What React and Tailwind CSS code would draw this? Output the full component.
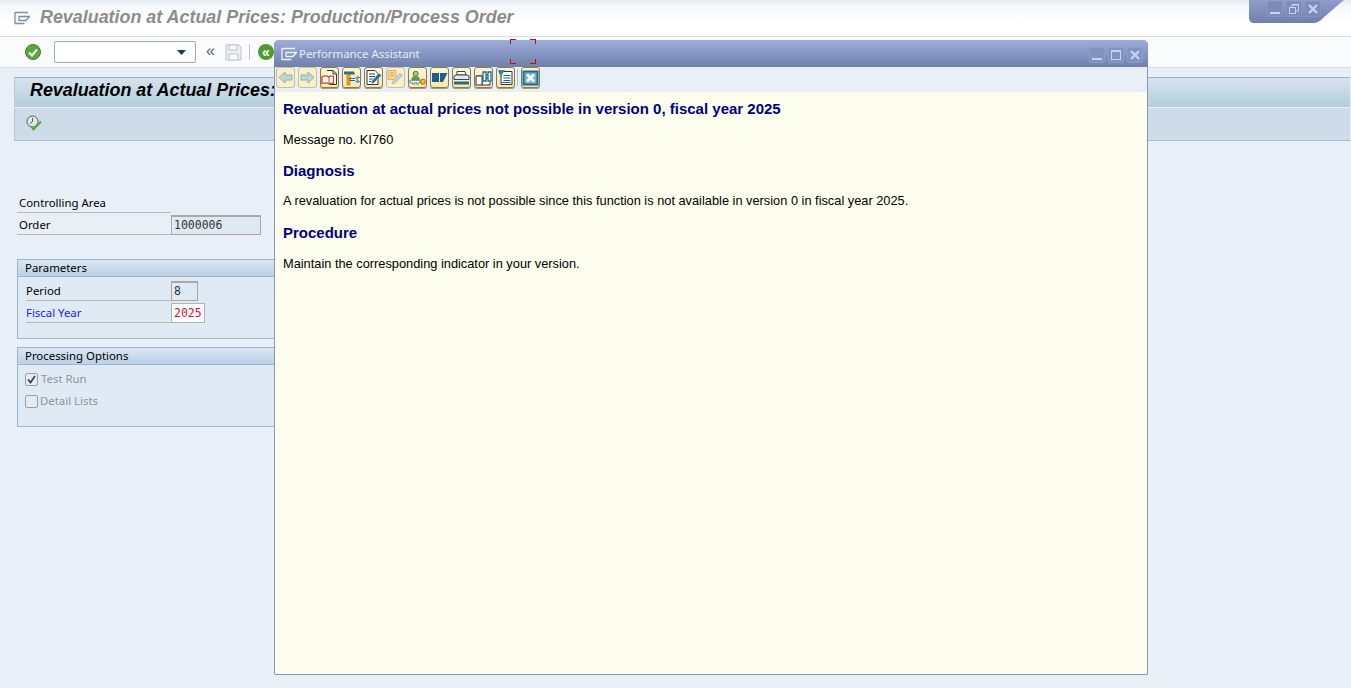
import React from 'react';

const labelFont = 'font-["Noto_Sans",sans-serif]';
const monoFont = 'font-["DejaVu_Sans_Mono",monospace]';

const ShellIcon = ({ color = '#7f8ea8', className = '' }) => (
  <svg width="16" height="14" viewBox="0 0 16 14" fill="none" className={className}>
    <path d="M1 1.500h13M1 1v11.500h9.500M5 5.500h10.500L12 9.500H5z" stroke={color} strokeWidth="1.300" />
  </svg>
);

const TbButton = ({ children, off }) => (
  <div className={`w-[19px] h-[21px] rounded-[3px] border flex items-center justify-center ${off ? 'border-[#c9c09a] bg-[#f9f0c8]' : 'border-[#867b58] bg-[linear-gradient(#fff6cf,#fbe8aa)] shadow-[0_1px_0_#a89a6a]'}`}>
    {children}
  </div>
);

const helpButtons = [
  // back
  <svg width="15" height="13" viewBox="0 0 15 13"><path d="M7 1 1 6.500 7 12V9h7V4H7z" fill="#bcd5d5" stroke="#8fb0b4" /></svg>,
  // forward
  <svg width="15" height="13" viewBox="0 0 15 13"><path d="M8 1l6 5.500L8 12V9H1V4h7z" fill="#bcd5d5" stroke="#8fb0b4" /></svg>,
  // book + page
  <svg width="17" height="17" viewBox="0 0 17 17" fill="none"><path d="M6 1.500h6l3.500 3.500v10.500H9" fill="#fff" stroke="#333" /><path d="M12 1.500V5h3.500" stroke="#333" /><path d="M1 7.500c3-1 5-1 7 .5 2-1.500 3-1.500 4.500-.5v7c-2-1-3-.500-4.500.5-2-1.500-4-1.500-7-.5z" fill="#fff" stroke="#d8431c" strokeWidth="1.300" /><path d="M8 8v7" stroke="#d8431c" /></svg>,
  // hammer + wrench
  <svg width="17" height="16" viewBox="0 0 17 16" fill="none"><path d="M1 1.500h10l1 3H1z" fill="#2a6f97" /><path d="M4 4.500h3V15H4z" fill="#f59b14" stroke="#b76a00" strokeWidth=".6" /><path d="M7 8.500h5a3 3 0 0 1 4.500-1l-2.500 1v2l2.500 1a3 3 0 0 1-4.500-1H7z" fill="#fff" stroke="#1f6a96" /></svg>,
  // note + pencil
  <svg width="17" height="17" viewBox="0 0 17 17" fill="none"><path d="M2 1.500h8l3 3v11H2z" fill="#fff" stroke="#333" /><path d="M4 5h6M4 7.500h6M4 10h4M4 12.500h2" stroke="#345" /><path d="M6 15l1-3.500L14 4l2.500 2.500L9 14z" fill="#2a6f97" stroke="#fff" strokeWidth=".5" /></svg>,
  // inactive note + pencil
  <svg width="17" height="17" viewBox="0 0 17 17" fill="none" opacity=".7"><path d="M1 1.500h8v9H1z" fill="#f6c979" stroke="#d79b3d" /><path d="M3 4h4M3 6.500h4" stroke="#c68a2e" /><path d="M5 15l1-3.500L13 4l2.500 2.500L8 14z" fill="#a9c4d4" stroke="#7f9fb2" strokeWidth=".7" /></svg>,
  // user + key
  <svg width="18" height="16" viewBox="0 0 18 16" fill="none"><circle cx="7" cy="3.500" r="2.700" fill="#a8c48a" stroke="#4c7a38" /><path d="M2.500 10c0-3 2-4 4.500-4s4.500 1 4.500 4z" fill="#5c9b4a" /><path d="M1 10.500h11v2.500h-2v1.500H8V13H6v1.500H4V13H1z" fill="#fff" stroke="#2a6f97" strokeWidth=".8" /><rect x="12.500" y="9.500" width="4.500" height="5" rx="1" fill="#f2c230" stroke="#c7521a" /></svg>,
  // split panel
  <svg width="17" height="11" viewBox="0 0 17 11"><path d="M1 1h7v9H1z" fill="#1f5f8f" /><path d="M9 1h7.500L12 10H9z" fill="#1f5f8f" /></svg>,
  // printer
  <svg width="17" height="16" viewBox="0 0 17 16" fill="none"><path d="M4 1.500h8l1 3.500H4z" fill="#fff" stroke="#345" /><path d="M1 6l2-1h11l2 1v3.500H1z" fill="#e6ebf0" stroke="#345" /><rect x="1" y="11.500" width="15" height="3" fill="#1f6a96" /></svg>,
  // binoculars + page
  <svg width="17" height="16" viewBox="0 0 17 16" fill="none"><path d="M1 6h6v9h8v-3" fill="#fff" stroke="#333" /><path d="M7 6V15H1V6z" fill="#fff" stroke="#333" /><path d="M8 2h3v9H8zM13 2h3v9h-3zM11 5h2v3h-2z" fill="#fff" stroke="#1f6a96" strokeWidth="1.300" /></svg>,
  // list
  <svg width="17" height="17" viewBox="0 0 17 17" fill="none"><path d="M2 2.500h13v13H4V7z" fill="#fff" stroke="#333" /><path d="M1 1h7L4 7z" fill="#2a86b8" /><path d="M6.500 6.500h7M6.500 9h7M6.500 11.500h7M5 13.500h8.500" stroke="#1f5f8f" /></svg>,
];

const WinBtn = ({ children, light }) => (
  <div className={`w-[16px] h-[16px] rounded-[2px] border flex items-center justify-center ${light ? 'border-[#8d9cc6] bg-[#8293c0]' : 'border-[#8494bd] bg-[#7c8cb6]'}`}>
    {children}
  </div>
);

const WinGlyph = ({ type, color = '#c5d2f0' }) => {
  if (type === 'min') return <svg width="12" height="12" viewBox="0 0 12 12"><rect x="1" y="9" width="10" height="2" fill={color} /></svg>;
  if (type === 'max') return <svg width="12" height="12" viewBox="0 0 12 12" fill="none"><rect x="1.500" y="1.500" width="9" height="9" stroke={color} /><rect x="1" y="1" width="10" height="2" fill={color} /></svg>;
  if (type === 'restore') return <svg width="12" height="12" viewBox="0 0 12 12" fill="none"><rect x="1.500" y="4.500" width="6" height="6" stroke={color} /><path d="M4 4V1.500h6.500V8H8" stroke={color} /><rect x="4" y="1" width="7" height="1.500" fill={color} /></svg>;
  return <svg width="12" height="12" viewBox="0 0 12 12"><path d="M2 2l8 8M10 2l-8 8" stroke={color} strokeWidth="2.400" /></svg>;
};

const Row = ({ label, labelClass = 'text-black', width, children }) => (
  <div className="flex items-end h-[22px]">
    <div className={`h-[22px] border-b border-[#b9b9b9] flex items-end text-[11.400px] leading-[18px] ${labelClass} ${width}`}>{label}</div>
    {children}
  </div>
);

const Group = ({ title, children }) => (
  <div className="w-[700px] border border-[#9db7d2] bg-[#dfeaf4]">
    <div className="h-[17px] bg-[linear-gradient(#d9e6f1,#bdd2e6)] border-b border-[#9db7d2] pl-[7px] text-[11.400px] leading-[16px] text-black">{title}</div>
    {children}
  </div>
);

export default function App() {
  return (
    <div className="relative w-[1351px] h-[688px] overflow-hidden bg-[#e8eff7] font-['Liberation_Sans',sans-serif]">
      {/* title bar */}
      <div className="h-[37px] bg-[linear-gradient(#e4eaf3_0px,#f6f8fb_6px,#ffffff_24px)] border-b border-[#d5dde6] flex items-center pl-[14px]">
        <ShellIcon className="mr-[10px]" />
        <div className="text-[17.900px] font-bold italic text-[#8c8c8c] leading-none">Revaluation at Actual Prices: Production/Process Order</div>
      </div>

      {/* system toolbar */}
      <div className="h-[31px] bg-[#fafbfd] border-b border-[#d5dde6] flex items-center pl-[25px]">
        <svg width="16" height="16" viewBox="0 0 16 16">
          <circle cx="8" cy="8" r="7.500" fill="#5aa83a" stroke="#3f7f2a" />
          <path d="M4 8.500l3 3 5-6" stroke="#fff" strokeWidth="2" fill="none" />
        </svg>
        <div className="ml-[13px] w-[142px] h-[22px] rounded-[2px] border border-[#a9a9a9] bg-white flex items-center justify-end pr-[9px]">
          <svg width="9" height="5" viewBox="0 0 9 5"><path d="M0 0h9L4.500 5z" fill="#1d3563" /></svg>
        </div>
        <div className="ml-[10px] w-[12px] text-[16px] leading-none text-[#5c6570] -mt-[2px]">«</div>
        <svg width="17" height="17" viewBox="0 0 17 17" fill="none" className="ml-[7px]">
          <path d="M1 1h13l2 2v13H1z" fill="#eceef0" stroke="#bfc4c9" />
          <path d="M4 1h8v5H4zM4 10h9v6H4z" fill="#f8f9fa" stroke="#bfc4c9" />
        </svg>
        <div className="ml-[7px] w-px h-[16px] bg-[#b7c6d4]" />
        <div className="ml-[8px] w-[16px] h-[16px] rounded-full bg-[#4f9a33] flex items-center justify-center text-[14px] leading-none font-bold text-white">«</div>
      </div>

      {/* screen */}
      <div className="pl-[14px] pr-px pt-[9px]">
        <div className="border-t border-[#9db0c4] bg-[linear-gradient(#d6e3ed,#b4cddd)] h-[30px] flex items-center pl-[15px] border-l border-l-[#b8c8d6]">
          <div className="text-[17.900px] font-bold italic text-black leading-none -mt-[4px]">Revaluation at Actual Prices: Production/Process Order</div>
        </div>
        <div className="h-[33px] mt-px bg-[#cddce8] border-b border-[#a9bccd] border-l border-l-[#b8c8d6] flex items-center pl-[11px]">
          <svg width="17" height="17" viewBox="0 0 17 17" fill="none" className="-mt-[2px]">
            <circle cx="6.500" cy="6.500" r="5.500" fill="#dfe8ee" stroke="#555" />
            <path d="M6.500 3v3.500L4 8.500" stroke="#555" />
            <path d="M5 11l2.500 3.500L15 6.500" stroke="#5aa83a" strokeWidth="2" />
          </svg>
        </div>

        <div className={`pl-[3px] pt-[50px] ${labelFont}`}>
          <Row label="Controlling Area" width="w-[154px] pl-[2px]" />
          <Row label="Order" width="w-[154px] pl-[2px]">
            <div className={`w-[90px] h-[20px] border border-[#a8a8a8] border-t-[2px] bg-[#dfe9f2] pl-[2px] text-[11.500px] leading-[17px] text-[#333] ${monoFont}`}>1000006</div>
          </Row>

          <div className="mt-[24px]">
            <Group title="Parameters">
              <div className="h-[61px] pl-[8px] pt-[2px]">
                <Row label="Period" width="w-[145px]">
                  <div className={`w-[27px] h-[20px] border border-[#a8a8a8] border-t-[2px] bg-[#dfe9f2] pl-[2px] text-[11.500px] leading-[17px] text-[#333] ${monoFont}`}>8</div>
                </Row>
                <Row label="Fiscal Year" labelClass="text-[#1a1aee]" width="w-[145px]">
                  <div className={`w-[34px] h-[20px] border border-[#b3b3b3] bg-white pl-[2px] text-[11.500px] leading-[18px] text-[#d0122a] ${monoFont}`}>2025</div>
                </Row>
              </div>
            </Group>
          </div>

          <div className="mt-[8px]">
            <Group title="Processing Options">
              <div className="h-[61px] pl-[7px] pt-[6px] text-[11.400px] text-[#8e949a]">
                <div className="flex items-center h-[16px]">
                  <div className="w-[13px] h-[13px] rounded-[2px] border border-[#9a9fa5] bg-[#e4ebf2] flex items-center justify-center">
                    <svg width="9" height="9" viewBox="0 0 9 9" fill="none"><path d="M1 4.500l2.500 3L8 1" stroke="#3d4146" strokeWidth="1.700" /></svg>
                  </div>
                  <span className="ml-[3px]">Test Run</span>
                </div>
                <div className="flex items-center h-[16px] mt-[6px]">
                  <div className="w-[13px] h-[13px] rounded-[2px] border border-[#9a9fa5] bg-[#e4ebf2]" />
                  <span className="ml-[2px]">Detail Lists</span>
                </div>
              </div>
            </Group>
          </div>
        </div>
      </div>

      {/* SAP window controls */}
      <div className="absolute left-[1249px] top-0 w-[96px] h-[23px]">
        <svg width="96" height="23" viewBox="0 0 96 23" className="absolute inset-0">
          <defs>
            <linearGradient id="winTab" x1="0" y1="0" x2="0" y2="1">
              <stop offset="0" stopColor="#8f9ec9" />
              <stop offset="1" stopColor="#6f7fac" />
            </linearGradient>
          </defs>
          <path d="M0 0h95L75 17q-5 6-11 6H5q-5 0-5-5z" fill="url(#winTab)" />
        </svg>
        <div className="relative flex gap-[3px] pl-[18px] pt-[1px]">
          <WinBtn><WinGlyph type="min" /></WinBtn>
          <WinBtn><WinGlyph type="restore" /></WinBtn>
          <WinBtn><WinGlyph type="close" /></WinBtn>
        </div>
      </div>

      {/* Performance Assistant dialog */}
      <div className="absolute left-[274px] top-[40px] w-[874px] h-[635px] flex flex-col rounded-t-[5px] rounded-b-[2px] border border-[#8695bb] border-t-0 bg-[#fefeee]">
        <div className="h-[27px] -mx-px rounded-t-[5px] bg-[linear-gradient(#9dacd8,#7080ad)] flex items-center pl-[7px] pr-[5px]">
          <ShellIcon color="#eef2fb" />
          <div className={`ml-[2px] text-[11.400px] text-[#e6ecf8] ${labelFont}`}>Performance Assistant</div>
          <div className="ml-auto flex gap-[3px] mt-[2px]">
            <WinBtn light><WinGlyph type="min" /></WinBtn>
            <WinBtn light><WinGlyph type="max" /></WinBtn>
            <WinBtn light><WinGlyph type="close" /></WinBtn>
          </div>
        </div>

        <div className="h-[25px] bg-[#e8eff7] flex items-start pl-[1px] gap-[3px]">
          {helpButtons.map((icon, i) => (
            <TbButton key={i} off={i < 2 || i === 5}>{icon}</TbButton>
          ))}
          <div className="w-px h-[17px] mt-[2px] -ml-px bg-[#b5c0cc]" />
          <TbButton>
            <svg width="17" height="16" viewBox="0 0 17 16">
              <rect x="0.500" y="0.500" width="16" height="15" fill="#1f6a96" />
              <rect x="2.500" y="2.500" width="12" height="11" fill="#7fb0d2" />
              <path d="M5 4.500l7 7M12 4.500l-7 7" stroke="#fff" strokeWidth="2.600" />
            </svg>
          </TbButton>
        </div>

        <div className="flex-1 pl-[8px] pt-[8px] text-[12.800px] text-black">
          <h1 className="text-[15px] leading-[17px] font-bold text-[#000080]">Revaluation at actual prices not possible in version 0, fiscal year 2025</h1>
          <p className="mt-[15px] leading-[15px]">Message no. KI760</p>
          <h2 className="mt-[15px] text-[15px] leading-[17px] font-bold text-[#000080]">Diagnosis</h2>
          <p className="mt-[14px] leading-[15px]">A revaluation for actual prices is not possible since this function is not available in version 0 in fiscal year 2025.</p>
          <h2 className="mt-[16px] text-[15px] leading-[17px] font-bold text-[#000080]">Procedure</h2>
          <p className="mt-[15px] leading-[15px]">Maintain the corresponding indicator in your version.</p>
        </div>
      </div>

      {/* focus brackets */}
      <div className="absolute left-[510px] top-[39px] w-[26px] h-[25px]">
        <div className="absolute left-0 top-0 w-[6px] h-[5px] border-l border-t border-[#b01515]" />
        <div className="absolute right-0 top-0 w-[6px] h-[5px] border-r border-t border-[#b01515]" />
        <div className="absolute left-0 bottom-0 w-[6px] h-[5px] border-l border-b border-[#b01515]" />
        <div className="absolute right-0 bottom-0 w-[6px] h-[5px] border-r border-b border-[#b01515]" />
      </div>
    </div>
  );
}
